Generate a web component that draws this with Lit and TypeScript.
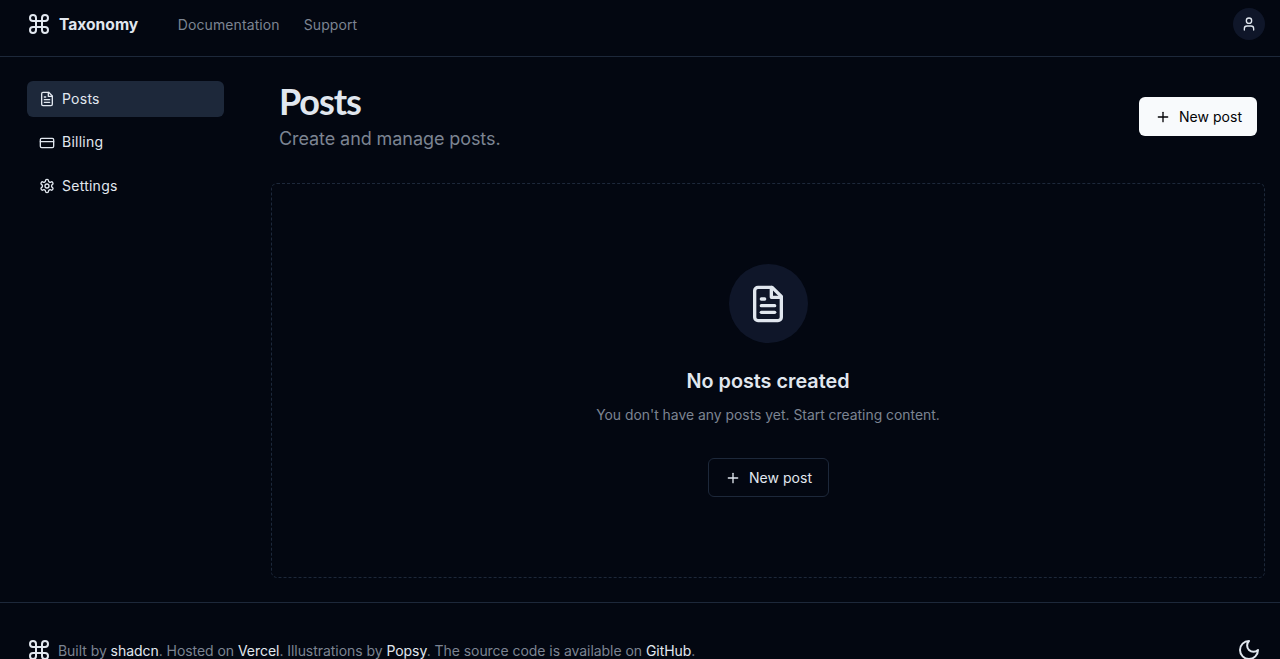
import { LitElement, css, html, svg } from "lit";
import { customElement } from "lit/decorators.js";

const icon = (body: unknown, cls = "") =>
  html`<svg class="icon ${cls}" viewBox="0 0 24 24" fill="none" stroke="currentColor" stroke-width="2" stroke-linecap="round" stroke-linejoin="round">${body}</svg>`;

const commandIcon = svg`<path d="M18 3a3 3 0 0 0-3 3v12a3 3 0 0 0 3 3 3 3 0 0 0 3-3 3 3 0 0 0-3-3H6a3 3 0 0 0-3 3 3 3 0 0 0 3 3 3 3 0 0 0 3-3V6a3 3 0 0 0-3-3 3 3 0 0 0-3 3 3 3 0 0 0 3 3h12a3 3 0 0 0 3-3 3 3 0 0 0-3-3z" />`;
const fileIcon = svg`<path d="M14.5 2H6a2 2 0 0 0-2 2v16a2 2 0 0 0 2 2h12a2 2 0 0 0 2-2V7.5L14.5 2z" /><polyline points="14 2 14 8 20 8" /><line x1="16" y1="13" x2="8" y2="13" /><line x1="16" y1="17" x2="8" y2="17" /><line x1="10" y1="9" x2="8" y2="9" />`;
const cardIcon = svg`<rect x="2" y="5" width="20" height="14" rx="2" /><line x1="2" y1="10" x2="22" y2="10" />`;
const gearIcon = svg`<path d="M12.22 2h-.44a2 2 0 0 0-2 2v.18a2 2 0 0 1-1 1.73l-.43.25a2 2 0 0 1-2 0l-.15-.08a2 2 0 0 0-2.73.73l-.22.38a2 2 0 0 0 .73 2.73l.15.1a2 2 0 0 1 1 1.72v.51a2 2 0 0 1-1 1.74l-.15.09a2 2 0 0 0-.73 2.73l.22.38a2 2 0 0 0 2.73.73l.15-.08a2 2 0 0 1 2 0l.43.25a2 2 0 0 1 1 1.73V20a2 2 0 0 0 2 2h.44a2 2 0 0 0 2-2v-.18a2 2 0 0 1 1-1.73l.43-.25a2 2 0 0 1 2 0l.15.08a2 2 0 0 0 2.73-.73l.22-.39a2 2 0 0 0-.73-2.73l-.15-.08a2 2 0 0 1-1-1.74v-.5a2 2 0 0 1 1-1.74l.15-.09a2 2 0 0 0 .73-2.73l-.22-.38a2 2 0 0 0-2.73-.73l-.15.08a2 2 0 0 1-2 0l-.43-.25a2 2 0 0 1-1-1.73V4a2 2 0 0 0-2-2z" /><circle cx="12" cy="12" r="3" />`;
const userIcon = svg`<path d="M19 21v-2a4 4 0 0 0-4-4H9a4 4 0 0 0-4 4v2" /><circle cx="12" cy="7" r="4" />`;
const plusIcon = svg`<line x1="12" y1="5" x2="12" y2="19" /><line x1="5" y1="12" x2="19" y2="12" />`;
const moonIcon = svg`<path d="M12 3a6 6 0 0 0 9 9 9 9 0 1 1-9-9Z" />`;

const navItems = [
  { label: "Posts", icon: fileIcon, active: true },
  { label: "Billing", icon: cardIcon, active: false },
  { label: "Settings", icon: gearIcon, active: false },
];

@customElement("app-root")
export class AppRoot extends LitElement {
  static styles = css`
    :host {
      display: flex;
      flex-direction: column;
      height: 100vh;
      overflow: hidden;
      background: #030711;
      color: #e1e7ef;
      font-family: Inter, "Liberation Sans", sans-serif;
      font-size: 14px;
    }
    .icon {
      display: block;
      flex: none;
      width: 16px;
      height: 16px;
    }
    .topbar {
      flex: none;
      display: flex;
      align-items: center;
      box-sizing: border-box;
      height: 57px;
      padding: 0 15px 8px 27px;
      border-bottom: 1px solid #1d283a;
    }
    .brand {
      display: flex;
      align-items: center;
      gap: 8px;
      margin-right: 39.5px;
      font-size: 15.6px;
      font-weight: 700;
    }
    .icon.logo {
      width: 24px;
      height: 24px;
    }
    .links {
      display: flex;
      gap: 24px;
      letter-spacing: 0.1px;
      color: #7c8492;
    }
    .avatar {
      margin-left: auto;
      display: flex;
      align-items: center;
      justify-content: center;
      width: 32px;
      height: 32px;
      border-radius: 50%;
      background: #0f1629;
    }
    .layout {
      flex: none;
      display: grid;
      grid-template-columns: 197px 1fr;
      gap: 47px;
      padding: 24px 15px 24px 27px;
    }
    .nav {
      display: flex;
      flex-direction: column;
      gap: 7.5px;
    }
    .nav-item {
      display: flex;
      align-items: center;
      gap: 7px;
      box-sizing: border-box;
      height: 36px;
      padding: 0 12px 2px;
      border-radius: 6px;
      letter-spacing: 0.25px;
    }
    .nav-item .icon {
      margin-top: 2px;
    }
    .nav-item.active {
      background: #1d283a;
    }
    .main {
      display: flex;
      flex-direction: column;
      gap: 30px;
    }
    .heading {
      display: flex;
      justify-content: space-between;
      align-items: center;
      padding: 0 8px;
      height: 72px;
    }
    .heading .btn {
      margin-bottom: 1px;
    }
    h1 {
      margin: -2px 0 2px;
      font-family: Lato, sans-serif;
      font-size: 36px;
      line-height: 44px;
      font-weight: 700;
      letter-spacing: -1.1px;
    }
    .sub {
      margin: 0;
      font-size: 18px;
      line-height: 28px;
      letter-spacing: -0.08px;
      color: #7c8492;
    }
    .btn {
      display: flex;
      align-items: center;
      justify-content: center;
      gap: 8px;
      width: 118px;
      height: 39px;
      padding: 0 0 0 1px;
      border-radius: 6px;
      border: 1px solid transparent;
      box-sizing: border-box;
      font: inherit;
      letter-spacing: 0.05px;
      color: inherit;
      background: none;
    }
    .btn.primary {
      background: #f8fafc;
      color: #020205;
    }
    .btn.outline {
      width: 121px;
      border-color: #1d283a;
      margin-top: -1px;
    }
    .empty {
      height: 395px;
      box-sizing: border-box;
      border: 1px dashed #1d283a;
      border-radius: 6px;
      display: flex;
      flex-direction: column;
      align-items: center;
      justify-content: center;
    }
    .empty-circle {
      display: flex;
      align-items: center;
      justify-content: center;
      width: 79px;
      height: 79px;
      border-radius: 50%;
      background: #0f1629;
    }
    .icon.large {
      width: 40px;
      height: 40px;
    }
    h2 {
      margin: 24px 0 0;
      font-size: 19.8px;
      line-height: 28px;
      font-weight: 600;
    }
    .empty p {
      margin: 7.5px 0 32.5px;
      line-height: 24px;
      font-size: 13.9px;
      color: #7c8492;
    }
    .footer {
      flex: none;
      display: flex;
      align-items: center;
      justify-content: space-between;
      height: 94px;
      padding: 0 19px 0 27px;
      border-top: 1px solid #1d283a;
    }
    .credits {
      display: flex;
      align-items: center;
      gap: 7px;
      letter-spacing: -0.05px;
      color: #7c8492;
    }
    .credits .icon {
      color: #e1e7ef;
    }
    .credits b {
      font-weight: 400;
      color: #e1e7ef;
    }
  `;

  render() {
    return html`
      <header class="topbar">
        <div class="brand">${icon(commandIcon, "logo")}<span>Taxonomy</span></div>
        <nav class="links"><span>Documentation</span><span>Support</span></nav>
        <div class="avatar">${icon(userIcon)}</div>
      </header>
      <div class="layout">
        <aside class="nav">
          ${navItems.map(
            (item) => html`
              <div class="nav-item ${item.active ? "active" : ""}">
                ${icon(item.icon)}<span>${item.label}</span>
              </div>
            `
          )}
        </aside>
        <main class="main">
          <div class="heading">
            <div>
              <h1>Posts</h1>
              <p class="sub">Create and manage posts.</p>
            </div>
            <button class="btn primary">${icon(plusIcon)}New post</button>
          </div>
          <section class="empty">
            <div class="empty-circle">${icon(fileIcon, "large")}</div>
            <h2>No posts created</h2>
            <p>You don't have any posts yet. Start creating content.</p>
            <button class="btn outline">${icon(plusIcon)}New post</button>
          </section>
        </main>
      </div>
      <footer class="footer">
        <div class="credits">
          ${icon(commandIcon, "logo")}
          <span>Built by <b>shadcn</b>. Hosted on <b>Vercel</b>. Illustrations by <b>Popsy</b>. The source code is available on <b>GitHub</b>.</span>
        </div>
        ${icon(moonIcon, "logo")}
      </footer>
    `;
  }
}
